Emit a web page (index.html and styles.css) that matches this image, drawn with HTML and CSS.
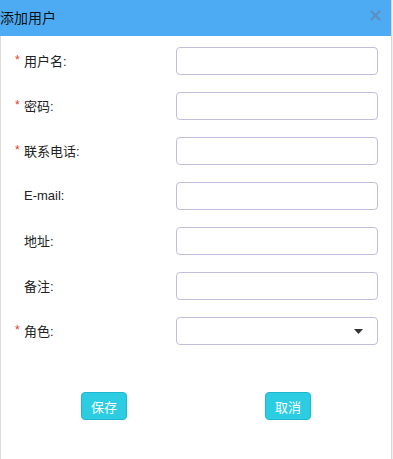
FILE: index.html
```html
<!DOCTYPE html>
<html lang="zh-CN">
<head>
  <meta charset="UTF-8">
  <meta name="viewport" content="width=device-width, initial-scale=1.0">
  <title>添加用户</title>
  <link rel="stylesheet" href="styles.css">
</head>
<body>

<div class="dialog">
  <div class="dialog-head">
    <span class="dialog-title">添加用户</span>
    <span class="dialog-close">
      <svg width="11" height="11" viewBox="0 0 11 11">
        <path d="M1.5 1.5 L9.5 9.5 M9.5 1.5 L1.5 9.5" stroke="#5f8fc0" stroke-width="2.4" stroke-linecap="round"/>
      </svg>
    </span>
  </div>

  <div class="dialog-body">
    <div class="row">
      <label class="lbl"><span class="req">*</span>用户名:</label>
      <input class="ipt" type="text">
    </div>
    <div class="row">
      <label class="lbl"><span class="req">*</span>密码:</label>
      <input class="ipt" type="password">
    </div>
    <div class="row">
      <label class="lbl"><span class="req">*</span>联系电话:</label>
      <input class="ipt" type="text">
    </div>
    <div class="row">
      <label class="lbl"><span class="req"></span>E-mail:</label>
      <input class="ipt" type="text">
    </div>
    <div class="row">
      <label class="lbl"><span class="req"></span>地址:</label>
      <input class="ipt" type="text">
    </div>
    <div class="row">
      <label class="lbl"><span class="req"></span>备注:</label>
      <input class="ipt" type="text">
    </div>
    <div class="row">
      <label class="lbl"><span class="req">*</span>角色:</label>
      <div class="ipt sel">
        <svg width="9" height="5" viewBox="0 0 9 5"><path d="M0 0 L9 0 L4.5 5 Z" fill="#333"/></svg>
      </div>
    </div>

    <div class="btns">
      <button class="btn btn-save">保存</button>
      <button class="btn btn-cancel">取消</button>
    </div>
  </div>
</div>

</body>
</html>
```

FILE: styles.css
```css
body {
  margin: 0;
  padding: 0;
  background: #f0f0f0;
  font-family: "Liberation Sans", "Noto Sans CJK SC", sans-serif;
}
.dialog {
  width: 390px;
  height: 459px;
  background: #fff;
  border-left: 1px solid #dcdcdc;
  border-right: 1px solid #d6d6d6;
  box-sizing: content-box;
}
.dialog-head {
  height: 36px;
  margin-left: -1px;
  background: #4dabf4;
  display: flex;
  align-items: center;
  justify-content: space-between;
}
.dialog-title {
  font-size: 14px;
  color: #111;
  line-height: 36px;
}
.dialog-close {
  display: flex;
  margin-right: 10px;
  margin-top: -6px;
}
.dialog-body {
  padding-top: 11px;
}
.row {
  display: flex;
  align-items: center;
  height: 28px;
  margin-bottom: 17px;
}
.lbl {
  width: 175px;
  display: flex;
  align-items: center;
  font-size: 13px;
  color: #222;
  margin-top: -2px;
}
.req {
  width: 9px;
  margin-left: 14px;
  color: #e0392f;
  font-size: 12px;
}
.ipt {
  width: 202px;
  height: 28px;
  box-sizing: border-box;
  border: 1px solid #c3bcdc;
  border-radius: 4px;
  background: #fff;
  outline: none;
  padding: 0 6px;
  margin: 0;
}
.sel {
  display: flex;
  align-items: center;
  justify-content: flex-end;
  padding-right: 14px;
}
.btns {
  display: flex;
  padding-top: 30px;
}
.btn {
  width: 46px;
  height: 28px;
  border: 1px solid #1fb6d0;
  border-radius: 4px;
  background: #2ccde3;
  color: #fff;
  font-family: "Liberation Sans", "Noto Sans CJK SC", sans-serif;
  font-size: 13px;
  padding: 0;
  cursor: pointer;
}
.btn-save {
  margin-left: 80px;
}
.btn-cancel {
  margin-left: 138px;
}
```
